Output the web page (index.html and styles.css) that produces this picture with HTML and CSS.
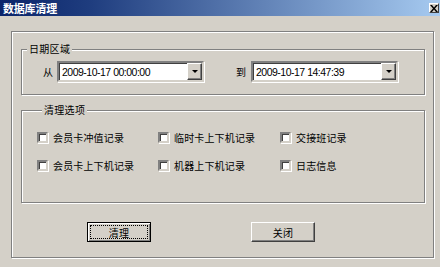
FILE: index.html
```
<!DOCTYPE html>
<html lang="zh-CN">
	<head>
		<meta charset="utf-8">

		<title>数据库清理</title>

		<link rel="stylesheet" href="styles.css">
	</head>
	<body>
	<div class="dialog">
		<div class="titlebar">
			<span class="title">数据库清理</span>
			<span class="close">
				<svg width="8" height="7" viewBox="0 0 8 7"><path d="M0 0h2l2 2.5L6 0h2L5 3.5 8 7H6L4 4.5 2 7H0l3-3.5z" fill="#000"/></svg>
			</span>
		</div>

		<div class="frame">
			<fieldset class="group date-group">
				<legend>日期区域</legend>
				<div class="date-row">
					<label class="date-label from">从</label>
					<div class="combo">
						<span class="combo-text">2009-10-17 00:00:00</span>
						<span class="combo-btn"><i class="arrow"></i></span>
					</div>
					<label class="date-label to">到</label>
					<div class="combo">
						<span class="combo-text">2009-10-17 14:47:39</span>
						<span class="combo-btn"><i class="arrow"></i></span>
					</div>
				</div>
			</fieldset>

			<fieldset class="group option-group">
				<legend>清理选项</legend>
				<div class="options">
					<label class="option"><span class="check"></span>会员卡冲值记录</label>
					<label class="option"><span class="check"></span>临时卡上下机记录</label>
					<label class="option"><span class="check"></span>交接班记录</label>
					<label class="option"><span class="check"></span>会员卡上下机记录</label>
					<label class="option"><span class="check"></span>机器上下机记录</label>
					<label class="option"><span class="check"></span>日志信息</label>
				</div>
			</fieldset>

			<div class="buttons">
				<button class="btn default"><span class="focus">清理</span></button>
				<button class="btn">关闭</button>
			</div>
		</div>
	</div>
	</body>
</html>
```

FILE: styles.css
```
html, body {
	margin: 0;
	padding: 0;
}

body {
	background: #d4d0c8;
	color: #000;

	font-family: "Liberation Sans", "Noto Sans CJK SC", sans-serif;
	font-size: 10px;
	line-height: 12px;
}

.dialog {
	width: 440px;
	height: 267px;
	overflow: hidden;
}

.titlebar {
	display: flex;
	align-items: center;
	justify-content: space-between;
	height: 16px;
	padding: 0 1px 0 3px;

	background: linear-gradient(to right, #0a246a 0%, #1e3c7e 20%, #a6caf0 100%);
}

.title {
	color: #fff;
	font-family: "Noto Sans CJK SC", sans-serif;
	font-size: 11px;
	font-weight: bold;
	letter-spacing: -0.2px;
}

.close {
	display: flex;
	align-items: center;
	justify-content: center;
	width: 8px;
	height: 8px;

	background: #d4d0c8;
	border: 1px solid;
	border-color: #fff #404040 #404040 #fff;
}

.frame {
	width: 421px;
	height: 225px;
	margin: 15px 0 0 11px;

	border: 1px solid #808080;
	box-shadow: 1px 1px 0 #fff, inset 1px 1px 0 #fff;
}

.group {
	margin: 0;
	min-width: 0;
	border: 1px solid #808080;
	box-shadow: 1px 1px 0 #fff, inset 1px 1px 0 #fff;
}

.group legend {
	padding: 0 2px;
	margin-left: 5px;
	background: #d4d0c8;

	font-family: "Noto Sans CJK SC", sans-serif;
	font-size: 10px;
	line-height: 12px;
	letter-spacing: 0.3px;
}

.date-group {
	width: 404px;
	height: 52px;
	box-sizing: border-box;
	margin: 11px 0 0 9px;
	padding: 6px 0 12px 0;
}

.date-row {
	display: flex;
	align-items: center;
}

.date-label {
	font-family: "Noto Sans CJK SC", sans-serif;
	font-size: 10px;
}

.date-label.from {
	margin: 0 4px 0 21px;
}

.date-label.to {
	margin: 0 5px 0 32px;
}

.combo {
	display: flex;
	align-items: center;
	justify-content: space-between;
	width: 143px;
	height: 17px;

	background: #fff;
	border: 2px solid;
	border-color: #808080 #d4d0c8 #d4d0c8 #808080;
	box-shadow: inset 1px 1px 0 #404040, 1px 1px 0 #fff;
}

.combo-text {
	padding-left: 3px;
	font-size: 10.5px;
	letter-spacing: -0.5px;
}

.combo-btn {
	display: flex;
	align-items: center;
	justify-content: center;
	width: 13px;
	height: 15px;

	background: #d4d0c8;
	border: 1px solid;
	border-color: #fff #404040 #404040 #fff;
	box-shadow: inset -1px -1px 0 #808080;
}

.arrow {
	width: 0;
	height: 0;
	border-left: 3px solid transparent;
	border-right: 3px solid transparent;
	border-top: 3px solid #000;
}

.option-group {
	width: 404px;
	height: 99px;
	box-sizing: border-box;
	margin: 9px 0 0 9px;
	padding: 15px 0 0 15px;
}

.options {
	display: grid;
	grid-template-columns: 121px 122px auto;
	row-gap: 15px;
}

.option {
	display: flex;
	align-items: center;
	height: 13px;

	font-family: "Noto Sans CJK SC", sans-serif;
	font-size: 10px;
	letter-spacing: 0.15px;
}

.check {
	width: 7px;
	height: 7px;
	margin-right: 5px;

	background: #fff;
	border: 2px solid;
	border-color: #808080 #d4d0c8 #d4d0c8 #808080;
	box-shadow: inset 1px 1px 0 #404040, 1px 1px 0 #fff;
}

.buttons {
	display: flex;
	gap: 100px;
	margin: 19px 0 0 75px;
}

.btn {
	width: 64px;
	height: 20px;
	padding: 0;

	background: #d4d0c8;
	color: #000;
	border: 1px solid;
	border-color: #fff #404040 #404040 #fff;
	box-shadow: inset -1px -1px 0 #808080;

	font-family: "Noto Sans CJK SC", sans-serif;
	font-size: 10px;
	letter-spacing: 0.3px;
}

.btn.default {
	border: 1px solid #000;
	box-shadow: inset 1px 1px 0 #fff, inset -1px -1px 0 #808080;
	padding: 2px;
}

.btn .focus {
	display: flex;
	align-items: center;
	justify-content: center;
	height: 100%;
	border: 1px dotted #000;
	box-sizing: border-box;
}
```
